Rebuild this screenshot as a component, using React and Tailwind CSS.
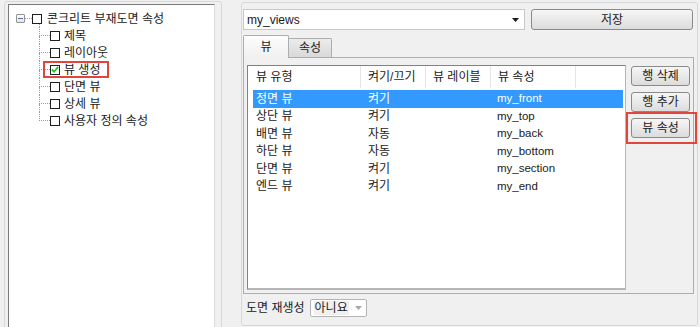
import React from 'react';

const treeItems = ['제목', '레이아웃', '뷰 생성', '단면 뷰', '상세 뷰', '사용자 정의 속성'];

const rows = [
  { type: '정면 뷰', onoff: '켜기', attr: 'my_front' },
  { type: '상단 뷰', onoff: '켜기', attr: 'my_top' },
  { type: '배면 뷰', onoff: '자동', attr: 'my_back' },
  { type: '하단 뷰', onoff: '자동', attr: 'my_bottom' },
  { type: '단면 뷰', onoff: '켜기', attr: 'my_section' },
  { type: '엔드 뷰', onoff: '켜기', attr: 'my_end' },
];

function CheckBox({ checked }) {
  return (
    <span className="w-[10px] h-[10px] border-[1.5px] border-[#1e1e1e] bg-white flex items-center justify-center shrink-0">
      {checked && (
        <svg width="9" height="9" viewBox="0 0 9 9">
          <path d="M1 4.5 L3.5 7 L8 1.5" fill="none" stroke="#1ec81e" strokeWidth="2" />
        </svg>
      )}
    </span>
  );
}

function WinButton({ children, className = '' }) {
  return (
    <button className={`h-[20px] rounded-[3px] border border-[#8a8a8a] bg-gradient-to-b from-[#f6f6f6] to-[#dcdcdc] text-[12px] text-[#1a1a1a] leading-none flex items-center justify-center ${className}`}>
      {children}
    </button>
  );
}

export default function App() {
  return (
    <div className="w-[700px] h-[327px] overflow-hidden bg-[#f0f0f0] flex font-['Liberation_Sans','Noto_Sans_CJK_KR',sans-serif] text-[12px] text-[#1a1a1a]">
      {/* left tree panel */}
      <div className="ml-[4px] mt-[1px] w-[218px] h-[340px] border border-[#d6d9dc] rounded-[3px] pl-[3px] pr-[6px] pt-[2px] shrink-0">
        <div className="h-full bg-white border border-[#7a7a7a] border-r-[#dcdcdc] pt-[5px]">
          <div className="flex items-center h-[17px] pl-[7px]">
            <span className="w-[9px] h-[9px] border border-[#949494] rounded-[1px] bg-gradient-to-b from-white to-[#e4e4e4] flex items-center justify-center">
              <span className="w-[5px] h-px bg-[#4b6fa8]" />
            </span>
            <span className="w-[7px] border-t border-dotted border-[#9a9a9a]" />
            <CheckBox />
            <span className="ml-[5px] whitespace-nowrap">콘크리트 부재도면 속성</span>
          </div>
          <div className="ml-[30px]">
            <div className="h-[4px] -mt-[4px] border-l border-dotted border-[#9a9a9a]" />
            {treeItems.map((t, i) => (
              <div key={t} className="flex items-center h-[17px]">
                <div className="w-[11px] h-full flex flex-col shrink-0">
                  <div className="h-1/2 border-l border-b border-dotted border-[#9a9a9a]" />
                  <div className={`h-1/2 ${i < treeItems.length - 1 ? 'border-l border-dotted border-[#9a9a9a]' : ''}`} />
                </div>
                <div className="relative flex items-center h-full">
                  <CheckBox checked={t === '뷰 생성'} />
                  <span className="ml-[4px] whitespace-nowrap">{t}</span>
                  {t === '뷰 생성' && (
                    <span className="absolute left-[-7px] top-0 w-[66px] h-[17px] border-2 border-[#e2453c]" />
                  )}
                </div>
              </div>
            ))}
          </div>
        </div>
      </div>

      {/* right panel */}
      <div className="ml-[19px] mt-[2px] w-[457px] h-[324px] border border-[#d6d9dc] rounded-[3px] pl-[1px] pt-[6px] flex flex-col shrink-0">
        <div className="flex items-center">
          <div className="w-[282px] h-[21px] bg-white border border-[#c8c8c8] flex items-center pl-[3px] pr-[5px]">
            <span className="flex-1">my_views</span>
            <svg width="7" height="4" viewBox="0 0 7 4">
              <path d="M0 0 H7 L3.5 4 Z" fill="#1a1a1a" />
            </svg>
          </div>
          <WinButton className="ml-[6px] w-[162px] h-[21px]">저장</WinButton>
        </div>

        {/* tabs */}
        <div className="mt-[5px] flex items-end h-[22px]">
          <div className="w-[46px] h-[23px] -mb-px z-10 border border-[#adadad] border-b-0 rounded-t-[2px] bg-gradient-to-b from-[#fdfdfd] to-[#f0f0f0] flex items-center justify-center">
            뷰
          </div>
          <div className="w-[43px] h-[19px] border border-[#adadad] border-l-0 border-b-0 rounded-tr-[2px] bg-gradient-to-b from-[#ececec] to-[#d9d9d9] flex items-center justify-center">
            속성
          </div>
        </div>

        <div className="w-[451px] h-[237px] border border-[#adadad] flex pl-[3px] pt-[7px]">
          {/* list */}
          <div className="w-[379px] h-[225px] bg-white border border-[#828282] border-r-[#b5b5b5] border-b-[#b5b5b5] border-b-2 pl-[5px]">
            <div className="flex h-[22px] items-center">
              {[['뷰 유형', 'w-[107px] pl-[3px]'], ['켜기/끄기', 'w-[65px] pl-[7px]'], ['뷰 레이블', 'w-[65px] pl-[7px]'], ['뷰 속성', 'w-[85px] pl-[7px]'], ['', 'w-[48px]']].map(([h, c], i) => (
                <div key={i} className={`${c} h-full flex items-center whitespace-nowrap ${i > 0 ? 'border-l border-[#e5e5e5]' : ''}`}>
                  {h}
                </div>
              ))}
            </div>
            <div className="mt-[2px]">
              {rows.map((r, i) => (
                <div key={r.type} className={`flex items-center h-[17.5px] w-[370px] ${i === 0 ? 'bg-[#3399ff] text-white' : ''}`}>
                  <div className="w-[107px] pl-[3px]">{r.type}</div>
                  <div className="w-[65px] pl-[8px]">{r.onoff}</div>
                  <div className="w-[65px]" />
                  <div className="w-[85px] pl-[7px] text-[11.5px]">{r.attr}</div>
                </div>
              ))}
            </div>
          </div>

          {/* side buttons */}
          <div className="ml-[5px] pt-[1px] flex flex-col gap-[6px]">
            <WinButton className="w-[59px]">행 삭제</WinButton>
            <WinButton className="w-[59px]">행 추가</WinButton>
            <div className="relative">
              <WinButton className="w-[59px]">뷰 속성</WinButton>
              <span className="absolute left-[-5px] top-[-6px] w-[71px] h-[32px] border-2 border-[#e2453c]" />
            </div>
          </div>
        </div>

        <div className="mt-[5px] pl-[3px] flex items-center h-[18px]">
          <span className="whitespace-nowrap">도면 재생성</span>
          <div className="ml-[5px] w-[57px] h-[18px] border border-[#b4b4b4] rounded-[2px] bg-white flex items-center pl-[3px] pr-[4px]">
            <span className="bg-[#f0f0f0] px-[1px] leading-[14px]">아니요</span>
            <span className="flex-1" />
            <svg width="7" height="4" viewBox="0 0 7 4">
              <path d="M0 0 H7 L3.5 4 Z" fill="#a8a8a8" />
            </svg>
          </div>
        </div>
      </div>
    </div>
  );
}
